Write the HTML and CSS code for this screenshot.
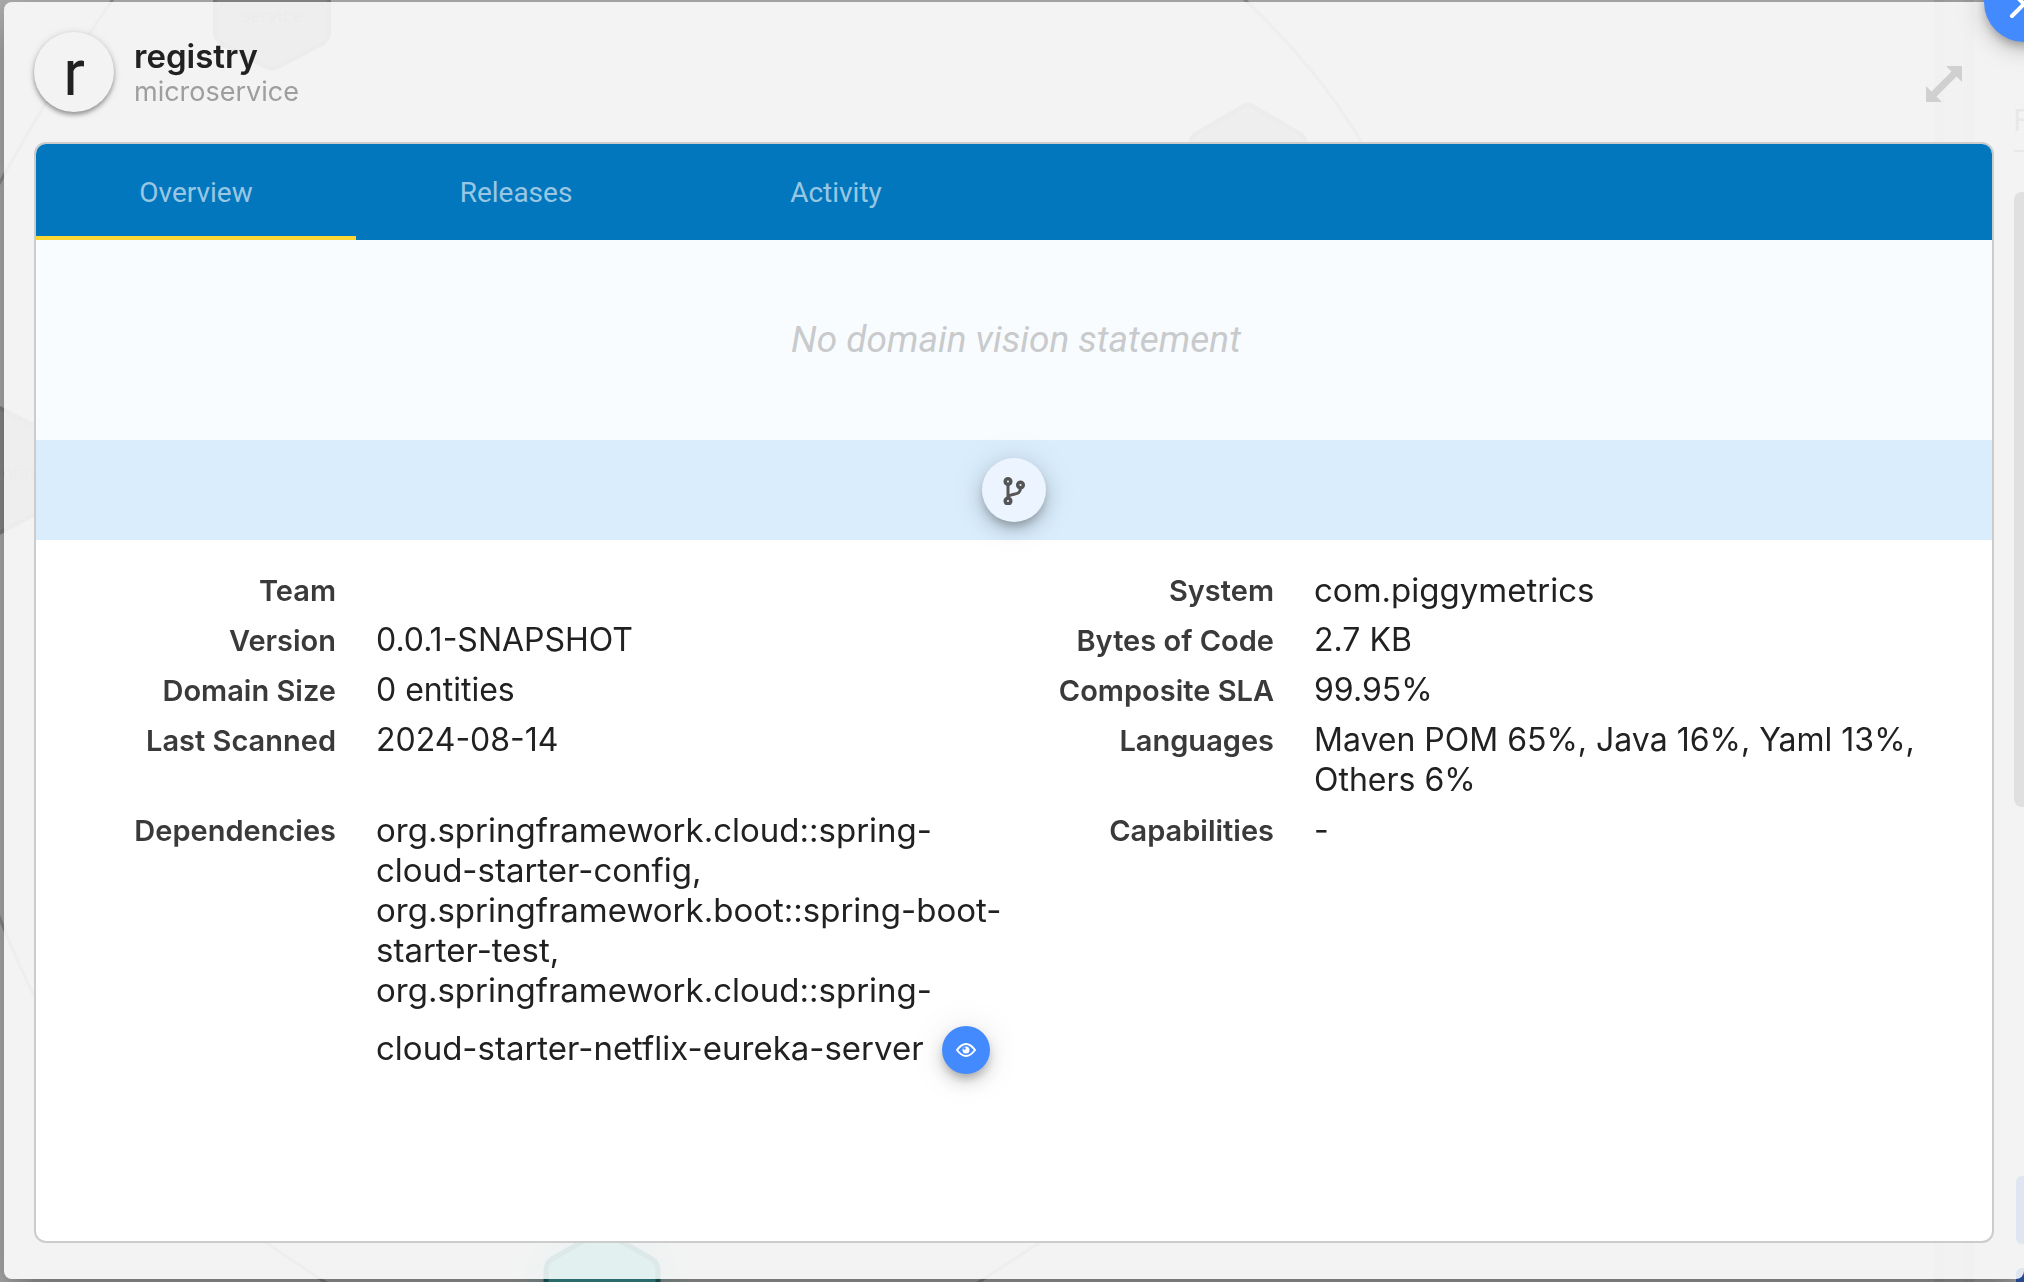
FILE: index.html
```html
<!DOCTYPE html>
<html lang="en">
<head>
<meta charset="utf-8">
<meta name="viewport" content="width=device-width, initial-scale=1">
<title>registry</title>
<link rel="stylesheet" href="styles.css">
</head>
<body>
<svg class="backdrop" viewBox="0 0 2024 1282" preserveAspectRatio="xMidYMid slice" aria-hidden="true">
  <defs>
    <radialGradient id="glow"><stop offset="0.3" stop-color="#7fa8a8"/><stop offset="1" stop-color="#7fa8a8" stop-opacity="0"/></radialGradient>
  </defs>
  <g class="links">
    <path d="M113 -1Q54 84 -1 184"/>
    <path d="M1244 -1Q1320 70 1366 150"/>
    <path d="M-1 916Q16 960 38 1004"/>
    <path d="M262 1240Q294 1262 328 1284"/>
    <path d="M1044 1240Q1010 1262 976 1284"/>
  </g>
  <g class="nodes">
    <path d="M215 -40V32Q215 40 222 44L266 67Q272 70 278 67L322 44Q329 40 329 32V-40Z"/>
    <path d="M1191 190V142Q1191 137 1197 133L1242 107Q1248 103 1254 107L1299 133Q1305 137 1305 142V190Z"/>
    <path d="M-16 400L43 430V510L-16 541Z"/>
  </g>
  <text class="node-label" x="272" y="22" text-anchor="middle">service</text>
  <text class="node-label" x="2" y="479">oring</text>
  <ellipse cx="602" cy="1282" rx="88" ry="80" fill="url(#glow)"/>
  <path class="active-node" d="M546 1300V1270Q546 1263 552 1259L596 1234Q602 1230 608 1234L652 1259Q658 1263 658 1270V1300Z"/>
  <rect x="1934" y="0" width="40" height="1282" fill="#a2a2a2"/>
  <rect x="1944" y="0" width="20" height="1282" fill="#a7a7a7"/>
  <text class="side-label" x="2013" y="131">F</text>
  <rect x="2014" y="150" width="20" height="2" fill="#686868"/>
  <rect x="2014" y="192" width="40" height="615" rx="8" fill="#323232"/>
  <rect x="2016" y="1176" width="40" height="68" rx="6" fill="#2b509f"/>
  <rect x="2016" y="1268" width="40" height="68" rx="6" fill="#2b56a8"/>
</svg>

<main class="dialog" role="dialog" aria-labelledby="name">
  <button class="round close" aria-label="Close">
    <svg width="32" height="32" viewBox="0 0 32 32"><path d="M4 4L28 28M28 4L4 28"/></svg>
  </button>
  <header class="head">
    <div class="avatar" aria-hidden="true">r</div>
    <div class="titles">
      <h1 id="name">registry</h1>
      <p>microservice</p>
    </div>
    <button class="expand" aria-label="Expand">
      <svg width="36" height="36" viewBox="0 0 36 36"><path d="M20 0H36V16L30.500 10.500L10.500 30.500L16 36H0V20L5.500 25.500L25.500 5.500Z"/></svg>
    </button>
  </header>

  <section class="card">
    <div class="tabs" role="tablist">
      <button class="tab selected" role="tab" aria-selected="true">Overview</button>
      <button class="tab" role="tab" aria-selected="false">Releases</button>
      <button class="tab" role="tab" aria-selected="false">Activity</button>
    </div>
    <p class="vision">No domain vision statement</p>
    <div class="actions">
      <button class="round repo" aria-label="Repository">
        <svg width="24" height="30" viewBox="0 0 24 30"><path d="M6 9V23M18.500 13C18.500 20 13 18 6 21"/><circle cx="6" cy="6.500" r="2.800"/><circle cx="18.500" cy="10" r="2.800"/><circle cx="6" cy="26" r="2.800"/></svg>
      </button>
    </div>
    <dl class="details">
      <dt>Team</dt><dd></dd>
      <dt>System</dt><dd class="identifier">com.piggymetrics</dd>
      <dt>Version</dt><dd>0.0.1-SNAPSHOT</dd>
      <dt>Bytes of Code</dt><dd>2.7 KB</dd>
      <dt>Domain Size</dt><dd>0 entities</dd>
      <dt>Composite SLA</dt><dd>99.95%</dd>
      <dt>Last Scanned</dt><dd>2024-08-14</dd>
      <dt>Languages</dt><dd>Maven POM 65%, Java 16%, Yaml 13%,<br>Others 6%</dd>
      <dt>Dependencies</dt>
      <dd class="identifier">org.springframework.cloud::spring-<br>cloud-starter-config,<br>org.springframework.boot::spring-boot-<br>starter-test,<br>org.springframework.cloud::spring-
        <span class="last">cloud-starter-netflix-eureka-server
          <button class="round view" aria-label="View dependencies">
            <svg width="20" height="14" viewBox="0 0 20 14"><path d="M1 7Q10 -5 19 7Q10 19 1 7Z"/><circle cx="10" cy="7" r="3.500"/><circle class="glint" cx="8.500" cy="5.500" r="1.200"/></svg>
          </button>
        </span>
      </dd>
      <dt>Capabilities</dt><dd>-</dd>
    </dl>
  </section>
</main>
</body>
</html>
```
FILE: styles.css
```css
* { box-sizing: border-box; }

body {
  margin: 0;
  padding: 2px 0 3px 4px;
  min-height: 100vh;
  display: flex;
  overflow: hidden;
  background: #adadad;
  color: #212121;
  font-family: Inter, "Noto Sans", sans-serif;
}

h1, p, dl, dd { margin: 0; }

button {
  padding: 0;
  border: 0;
  background: none;
  font: inherit;
  cursor: pointer;
}

svg { display: block; }

.backdrop {
  position: fixed;
  inset: 0;
  width: 100%;
  height: 100%;
}

.links path { fill: none; stroke: #8a8a8a; stroke-width: 3; }
.nodes path { fill: #8a8a8a; stroke: #7f7f7f; stroke-width: 4; }
.active-node { fill: #3d9a9a; stroke: #1f6666; stroke-width: 5; }
.node-label { fill: #7c7c7c; font-size: 18px; }
.side-label { fill: #686868; font-family: Roboto, sans-serif; font-size: 32px; }

.dialog {
  position: relative;
  flex: 1;
  display: flex;
  flex-direction: column;
  gap: 30px;
  min-width: 0;
  padding: 30px 30px 36px;
  border-radius: 8px;
  background: rgba(255, 255, 255, 0.85);
  box-shadow: 0 22px 30px -14px rgba(0, 0, 0, 0.2), 0 24px 38px 3px rgba(0, 0, 0, 0.14), 0 9px 46px 8px rgba(0, 0, 0, 0.12);
}

.round {
  display: flex;
  align-items: center;
  justify-content: center;
  border-radius: 50%;
  box-shadow: 0 6px 10px -2px rgba(0, 0, 0, 0.24), 0 8px 20px rgba(0, 0, 0, 0.14), 0 2px 36px rgba(0, 0, 0, 0.1);
}

.close {
  position: absolute;
  top: -40px;
  right: -40px;
  width: 80px;
  height: 80px;
  padding-top: 4px;
  background: #448aff;
}

.close path { fill: none; stroke: #fff; stroke-width: 4; stroke-linecap: round; }

.head { display: flex; align-items: center; gap: 20px; }

.avatar {
  width: 80px;
  height: 80px;
  border-radius: 50%;
  background: #f3f3f3;
  box-shadow: 0 3px 4px rgba(0, 0, 0, 0.32), 0 1px 8px rgba(0, 0, 0, 0.14);
  font-family: Roboto, sans-serif;
  font-size: 64px;
  line-height: 84px;
  text-align: center;
}

.titles { flex: 1; padding-top: 4px; }
.titles h1 { font-size: 33px; font-weight: 600; line-height: 36px; }
.titles p { color: #9e9e9e; font-size: 27px; line-height: 36px; }

.expand { margin: 24px 32px 0 0; }
.expand path { fill: #d0d0d0; }

.card {
  flex: 1;
  overflow: hidden;
  border: 2px solid #ccc;
  border-radius: 12px;
  background: #fff;
}

.tabs { display: flex; background: #0277bd; font-family: Roboto, sans-serif; }

.tab {
  width: 320px;
  height: 96px;
  border-bottom: 4px solid transparent;
  border-top: 4px solid transparent;
  color: rgba(255, 255, 255, 0.6);
  font-size: 28px;
}

.tab.selected { border-bottom-color: #fdd835; }

.vision {
  padding: 80px 0 80px 4px;
  background: #f8fcff;
  color: #c8cacc;
  font-family: Roboto, sans-serif;
  font-size: 37px;
  font-style: italic;
  line-height: 40px;
  text-align: center;
}

.actions { display: flex; justify-content: center; padding: 18px; background: #daedfc; }

.repo { width: 64px; height: 64px; background: #ecf5ff; }
.repo path { fill: none; stroke: #555; stroke-width: 3; }
.repo circle { fill: #ecf5ff; stroke: #555; stroke-width: 3.5; }

.details {
  display: grid;
  grid-template-columns: 260px 1fr 260px 1fr;
  row-gap: 10px;
  padding: 30px 40px;
  line-height: 40px;
}

.details dt { padding-top: 1px; color: #3a3a3a; font-size: 29px; font-weight: 600; line-height: 39px; text-align: right; }
.details dd { padding-left: 40px; font-size: 32px; white-space: nowrap; }
.details .identifier { font-size: 33px; }

.last { display: flex; align-items: center; gap: 18px; padding-top: 12px; }

.view { width: 48px; height: 48px; margin-top: 4px; background: #448aff; }
.view path { fill: none; stroke: #fff; stroke-width: 2; }
.view circle { fill: #fff; }
.view .glint { fill: #448aff; }
```
